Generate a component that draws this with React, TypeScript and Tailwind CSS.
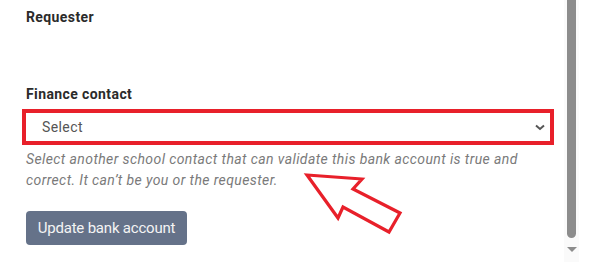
import { useState } from 'react'

// Bank account form fragment: finance contact picker with an annotation arrow.

function CalloutArrow() {
  return (
    <svg
      className="absolute left-[300px] top-[168px] pointer-events-none"
      width="110"
      height="72"
      viewBox="300 168 110 72"
    >
      <polygon
        points="307,175 362,179 353,189 400,213 389,232 343,207 338,218"
        fill="none"
        stroke="#e8202a"
        strokeWidth="3.2"
        strokeLinejoin="miter"
      />
    </svg>
  )
}

function FakeScrollbar() {
  return (
    <div className="absolute top-0 left-[564px] w-[15px] h-[262px] bg-[#fafafa] flex flex-col items-center">
      <div className="w-[9px] h-[238px] bg-[#8c8c8c] rounded-b-[5px]" />
      <div className="mt-[9px] w-0 h-0 border-l-[5px] border-r-[5px] border-t-[5px] border-l-transparent border-r-transparent border-t-[#8c8c8c]" />
    </div>
  )
}

export default function App() {
  const [contact, setContact] = useState('')

  return (
    <div className="relative w-[589px] h-[274px] bg-white overflow-hidden font-['Roboto','Liberation_Sans',sans-serif] tracking-[0.4px]">
      <div className="pl-[26px] pt-[7px] w-[555px]">
        <p className="text-[14px] leading-[20px] font-bold text-[#2b2b2b]">Requester</p>

        <p className="mt-[57px] text-[14px] leading-[20px] font-bold text-[#2b2b2b]">Finance contact</p>

        {/* highlighted select */}
        <div className="relative -ml-[4px] mt-[5px] w-[532px] h-[36px] border-[4px] border-[#e8202a]">
          <select
            value={contact}
            onChange={(e) => setContact(e.target.value)}
            className="appearance-none w-full h-full bg-white pl-[16px] text-[14px] tracking-[0.4px] text-[#555] outline-none"
          >
            <option value="">Select</option>
          </select>
          <svg
            className="absolute right-[5px] top-[11px] pointer-events-none"
            width="10"
            height="7"
            viewBox="0 0 10 7"
          >
            <path d="M1 1.5 L5 5 L9 1.5" fill="none" stroke="#555" strokeWidth="2" />
          </svg>
        </div>

        <p className="mt-[4px] text-[14px] leading-[21px] italic text-[#7a7a7a]">
          Select another school contact that can validate this bank account is true and
          <br />
          correct. It can’t be you or the requester.
        </p>

        <button
          type="button"
          className="mt-[20px] h-[34px] w-[161px] rounded-[4px] bg-[#657289] text-[#f4f4f4] text-[15px] tracking-[-0.2px] whitespace-nowrap"
        >
          Update bank account
        </button>
      </div>

      <CalloutArrow />
      <FakeScrollbar />
    </div>
  )
}
